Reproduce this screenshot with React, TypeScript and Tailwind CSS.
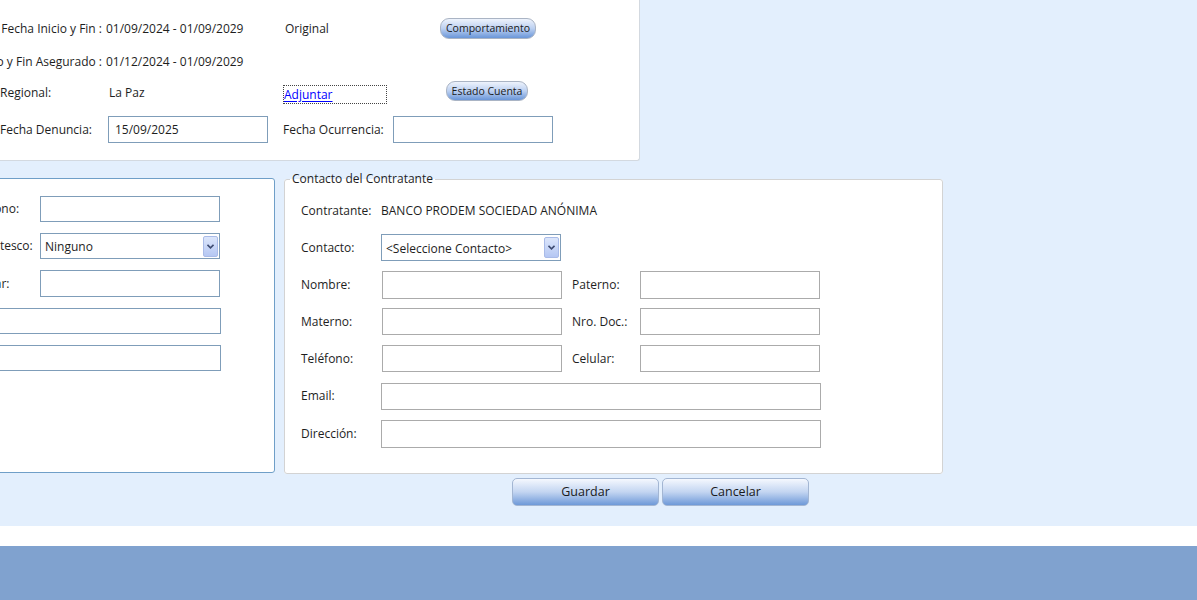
import React from 'react';

const txt = 'text-[12px] text-[#1e1e1e] whitespace-nowrap';

const PillButton: React.FC<{ label: string; w: string; h: string }> = ({ label, w, h }) => (
  <button
    className={`${w} ${h} shrink-0 rounded-[9px] border border-[#aab4c4] bg-gradient-to-b from-[#eef3fc] via-[#bcd0f1] to-[#6a96d8] text-[10.5px] text-[#1a1a1a] leading-none`}
  >
    {label}
  </button>
);

const BigButton: React.FC<{ label: string }> = ({ label }) => (
  <button className="w-[147px] h-[28px] rounded-[5px] border border-[#a3b6d3] bg-gradient-to-b from-[#f5f8fe] via-[#c3d5f1] to-[#6e99d8] text-[12.5px] text-[#1a1a1a]">
    {label}
  </button>
);

const Field: React.FC<{ w: string; h?: string; border?: string; value?: string }> = ({
  w,
  h = 'h-[27px]',
  border = 'border-[#7f9db9]',
  value,
}) => (
  <div className={`${w} ${h} shrink-0 border ${border} bg-white flex items-center pl-[6px] ${txt}`}>
    {value}
  </div>
);

const Select: React.FC<{ w: string; h: string; value: string }> = ({ w, h, value }) => (
  <div className={`${w} ${h} shrink-0 border border-[#7f9db9] bg-white flex items-center justify-between pl-[4px] pr-[1px] ${txt}`}>
    <span className="pt-[2px]">{value}</span>
    <span className="w-[15px] h-[21px] rounded-[2px] border border-[#a9bbe8] bg-gradient-to-b from-[#dce6fb] to-[#b5c7f3] flex items-center justify-center">
      <svg width="7" height="5" viewBox="0 0 7 5">
        <path d="M0.5 0.8 L3.5 3.8 L6.5 0.8" fill="none" stroke="#3e4c72" strokeWidth="1.6" />
      </svg>
    </span>
  </div>
);

const ContactRow: React.FC<{ children: React.ReactNode; h?: string }> = ({ children, h = 'h-[37px]' }) => (
  <div className={`flex items-center ${h}`}>{children}</div>
);

export default function App() {
  return (
    <div className="w-[1197px] h-[600px] overflow-hidden flex flex-col font-['Open_Sans',sans-serif]">
      <div className="h-[526px] shrink-0 bg-[#e3effd] overflow-hidden">
        <div className="-ml-[120px] w-[1317px]">
          {/* Datos de la póliza */}
          <div className="w-[760px] h-[161px] bg-white border-r border-b border-[#d3d9e0] rounded-br-[3px] pt-[13px]">
            <div className="flex items-center h-[32px]">
              <span className={`w-[226px] text-right pr-[4px] ${txt}`}>Fecha Inicio y Fin :</span>
              <span className={`w-[179px] ${txt}`}>01/09/2024 - 01/09/2029</span>
              <span className={`w-[155px] ${txt}`}>Original</span>
              <span className="-mt-[5px]">
                <PillButton label="Comportamiento" w="w-[96px]" h="h-[21px]" />
              </span>
            </div>
            <div className="flex items-center h-[34px]">
              <span className={`w-[226px] text-right pr-[4px] ${txt}`}>Fecha Inicio y Fin Asegurado :</span>
              <span className={`w-[179px] ${txt}`}>01/12/2024 - 01/09/2029</span>
            </div>
            <div className="flex items-center h-[28px]">
              <span className="w-[120px] shrink-0" />
              <span className={`w-[109px] ${txt}`}>Regional:</span>
              <span className={`w-[174px] ${txt}`}>La Paz</span>
              <span className="w-[104px] h-[19px] mt-[3px] border border-dotted border-[#444] flex items-center text-[12px] text-[#0000ff] underline underline-offset-2">
                Adjuntar
              </span>
              <span className="w-[59px] shrink-0" />
              <span className="mb-[8px]">
                <PillButton label="Estado Cuenta" w="w-[82px]" h="h-[20px]" />
              </span>
            </div>
            <div className="flex items-center h-[27px] mt-[9px]">
              <span className="w-[120px] shrink-0" />
              <span className={`w-[108px] ${txt}`}>Fecha Denuncia:</span>
              <Field w="w-[160px]" value="15/09/2025" />
              <span className="w-[15px] shrink-0" />
              <span className={`w-[110px] ${txt}`}>Fecha Ocurrencia:</span>
              <Field w="w-[160px]" />
            </div>
          </div>

          {/* Beneficiario + contacto */}
          <div className="flex items-start mt-[10px]">
            <div className="mt-[7px] w-[395px] h-[295px] shrink-0 bg-white border border-[#6f9fc8] rounded-[3px] pt-[17px] pl-[86px] flex flex-col gap-[11px]">
              <div className="flex items-center">
                <span className={`w-[73px] ${txt}`}>Teléfono:</span>
                <Field w="w-[180px]" h="h-[26px]" />
              </div>
              <div className="flex items-center">
                <span className={`w-[73px] ${txt}`}>Parentesco:</span>
                <Select w="w-[180px]" h="h-[26px]" value="Ninguno" />
              </div>
              <div className="flex items-center">
                <span className={`w-[73px] ${txt}`}>Celular:</span>
                <Field w="w-[180px]" h="h-[27px]" />
              </div>
              <Field w="w-[254px]" h="h-[26px]" />
              <Field w="w-[254px]" h="h-[26px]" />
            </div>

            <fieldset className="ml-[9px] w-[659px] h-[303px] shrink-0 bg-white border border-[#d3d3d3] rounded-[3px] px-[16px] pt-[5px]">
              <legend className={`ml-[-11px] px-[2px] leading-[16px] ${txt}`}>Contacto del Contratante</legend>
              <ContactRow>
                <span className={`w-[80px] ${txt}`}>Contratante:</span>
                <span className={txt}>BANCO PRODEM SOCIEDAD ANÓNIMA</span>
              </ContactRow>
              <ContactRow>
                <span className={`w-[80px] ${txt}`}>Contacto:</span>
                <Select w="w-[180px]" h="h-[27px]" value="<Seleccione Contacto>" />
              </ContactRow>
              <ContactRow>
                <span className={`w-[81px] ${txt}`}>Nombre:</span>
                <Field w="w-[180px]" h="h-[28px]" border="border-[#ababab]" />
                <span className={`ml-[10px] w-[68px] ${txt}`}>Paterno:</span>
                <Field w="w-[180px]" h="h-[28px]" border="border-[#ababab]" />
              </ContactRow>
              <ContactRow>
                <span className={`w-[81px] ${txt}`}>Materno:</span>
                <Field w="w-[180px]" border="border-[#ababab]" />
                <span className={`ml-[10px] w-[68px] ${txt}`}>Nro. Doc.:</span>
                <Field w="w-[180px]" border="border-[#ababab]" />
              </ContactRow>
              <ContactRow>
                <span className={`w-[81px] ${txt}`}>Teléfono:</span>
                <Field w="w-[180px]" border="border-[#ababab]" />
                <span className={`ml-[10px] w-[68px] ${txt}`}>Celular:</span>
                <Field w="w-[180px]" border="border-[#ababab]" />
              </ContactRow>
              <ContactRow h="h-[38px]">
                <span className={`w-[80px] ${txt}`}>Email:</span>
                <Field w="w-[440px]" border="border-[#ababab]" />
              </ContactRow>
              <ContactRow h="h-[38px]">
                <span className={`w-[80px] ${txt}`}>Dirección:</span>
                <Field w="w-[440px]" h="h-[28px]" border="border-[#ababab]" />
              </ContactRow>
            </fieldset>
          </div>

          <div className="flex gap-[3px] pl-[632px] mt-[4px]">
            <BigButton label="Guardar" />
            <BigButton label="Cancelar" />
          </div>
        </div>
      </div>
      <div className="h-[20px] shrink-0 bg-white" />
      <div className="flex-1 bg-[#80a2cf]" />
    </div>
  );
}
